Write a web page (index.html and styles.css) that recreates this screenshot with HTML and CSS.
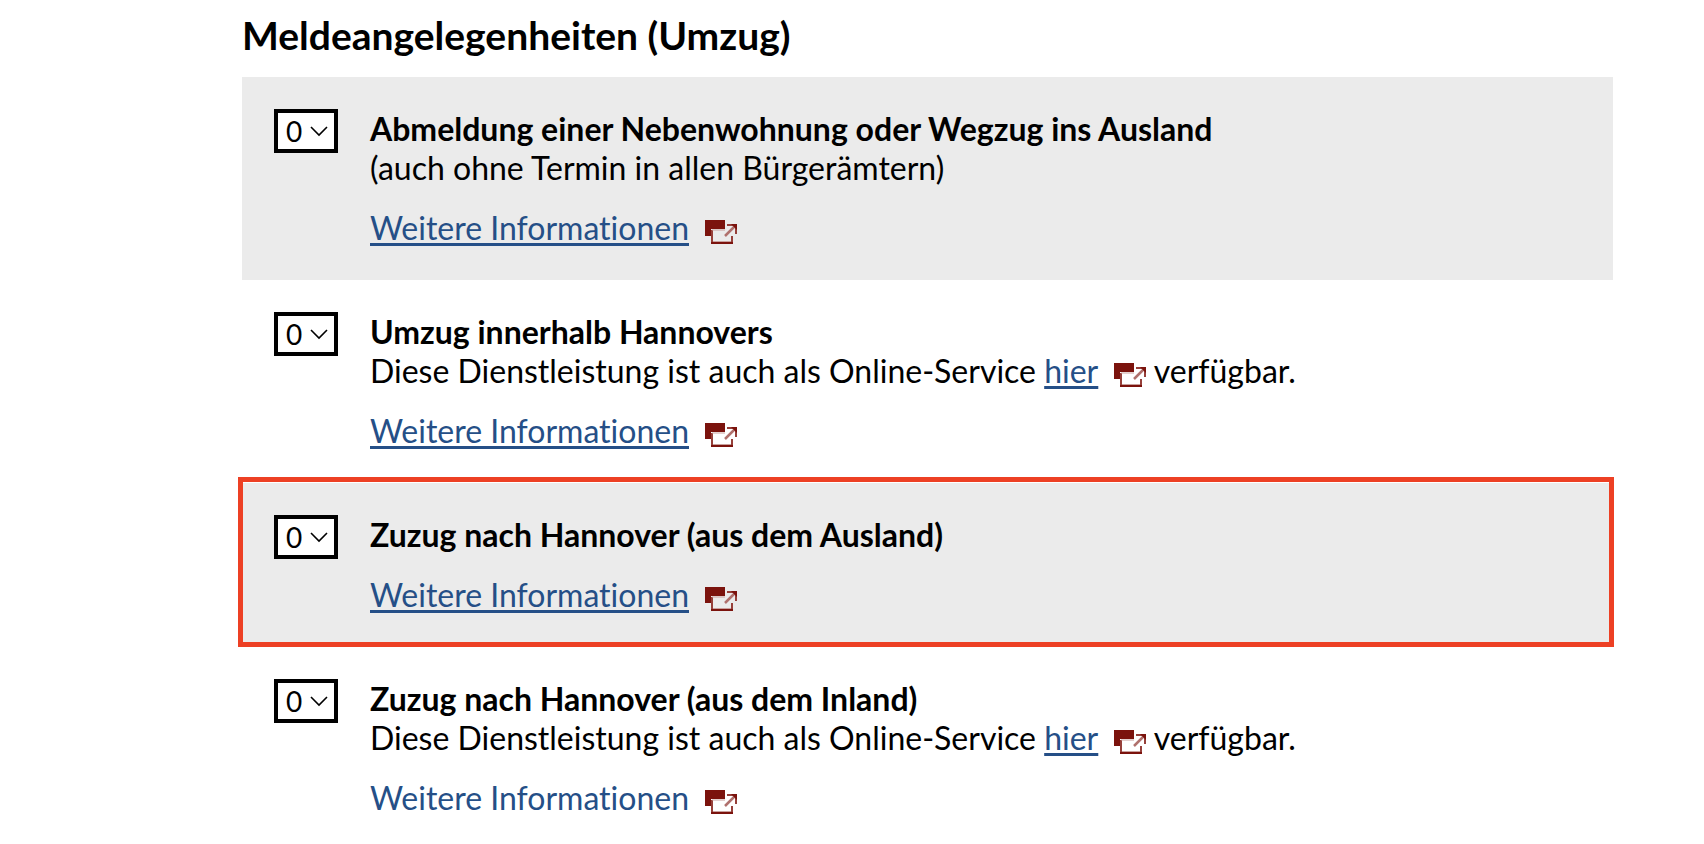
FILE: index.html
```html
<!DOCTYPE html>
<html lang="de">
<head>
    <meta charset="UTF-8">
    <meta name="viewport" content="width=device-width, initial-scale=1.0">
    <title>Meldeangelegenheiten (Umzug)</title>
    <link rel="stylesheet" href="styles.css">
</head>
<body>
    <!-- Symbole -->
    <svg class="symbols" aria-hidden="true">
        <symbol id="extern" viewBox="0 0 32 24">
            <path d="M0 0h20v9H6v7H0z" fill="#7b130d"/>
            <path d="M7 10v13M27 23v-7" fill="none" stroke="#96403a" stroke-width="2"/>
            <path d="M7 10h13" fill="none" stroke="#c9a09d" stroke-width="1"/>
            <path d="M6 23h22" fill="none" stroke="#7b130d" stroke-width="2"/>
            <path d="M8 21.500h18" fill="none" stroke="#c9a09d" stroke-width="1"/>
            <path d="M20 16L30 6" fill="none" stroke="#b0716d" stroke-width="2.500"/>
            <path d="M22 5h9v9" fill="none" stroke="#96403a" stroke-width="2"/>
            <path d="M26 4h6v6z" fill="#7b130d"/>
        </symbol>
        <symbol id="pfeil" viewBox="0 0 18 12">
            <path d="M1 2l8 8 8-8" fill="none" stroke="#000" stroke-width="1.600"/>
        </symbol>
    </svg>

    <main class="services">
        <h2>Meldeangelegenheiten (Umzug)</h2>

        <div class="service grey">
            <div class="amount">
                <select id="service-1" name="service-1">
                    <option>0</option>
                    <option>1</option>
                    <option>2</option>
                </select>
                <svg class="arrow"><use href="#pfeil"/></svg>
            </div>
            <div class="text">
                <label for="service-1">Abmeldung einer Nebenwohnung oder Wegzug ins Ausland</label>
                <p>(auch ohne Termin in allen Bürgerämtern)</p>
                <p class="more"><a href="#info-1">Weitere Informationen</a><svg class="extern"><use href="#extern"/></svg></p>
            </div>
        </div>

        <div class="service">
            <div class="amount">
                <select id="service-2" name="service-2">
                    <option>0</option>
                    <option>1</option>
                    <option>2</option>
                </select>
                <svg class="arrow"><use href="#pfeil"/></svg>
            </div>
            <div class="text">
                <label for="service-2">Umzug innerhalb Hannovers</label>
                <p>Diese Dienstleistung ist auch als Online-Service <a href="#online-2">hier</a><svg class="extern"><use href="#extern"/></svg> verfügbar.</p>
                <p class="more"><a href="#info-2">Weitere Informationen</a><svg class="extern"><use href="#extern"/></svg></p>
            </div>
        </div>

        <div class="service grey marked">
            <div class="amount">
                <select id="service-3" name="service-3">
                    <option>0</option>
                    <option>1</option>
                    <option>2</option>
                </select>
                <svg class="arrow"><use href="#pfeil"/></svg>
            </div>
            <div class="text">
                <label for="service-3">Zuzug nach Hannover (aus dem Ausland)</label>
                <p class="more"><a href="#info-3">Weitere Informationen</a><svg class="extern"><use href="#extern"/></svg></p>
            </div>
        </div>

        <div class="service last">
            <div class="amount">
                <select id="service-4" name="service-4">
                    <option>0</option>
                    <option>1</option>
                    <option>2</option>
                </select>
                <svg class="arrow"><use href="#pfeil"/></svg>
            </div>
            <div class="text">
                <label for="service-4">Zuzug nach Hannover (aus dem Inland)</label>
                <p>Diese Dienstleistung ist auch als Online-Service <a href="#online-4">hier</a><svg class="extern"><use href="#extern"/></svg> verfügbar.</p>
                <p class="more"><a class="plain" href="#info-4">Weitere Informationen</a><svg class="extern"><use href="#extern"/></svg></p>
            </div>
        </div>
    </main>
</body>
</html>
```
FILE: styles.css
```css
body {
    margin: 0;
    background-color: #ffffff;
    color: #000000;
    font-family: Lato, sans-serif;
    font-size: 32px;
    line-height: 39px;
    font-variant-ligatures: none;
}

.symbols {
    display: none;
}

.services {
    padding: 11px 91px 0 242px;
}

.services h2 {
    margin: 0 0 18px;
    font-size: 39px;
    line-height: 48px;
}

.service {
    display: flex;
    align-items: flex-start;
    gap: 32px;
    padding: 32px 32px 33px;
}

.service.grey {
    background-color: #ebebeb;
}

.service.last {
    padding-bottom: 0;
}

/* roter Rahmen liegt über der Zeile */
.service.marked {
    position: relative;
}

.service.marked::after {
    content: "";
    position: absolute;
    inset: -6px -1px 0 -4px;
    border: 5px solid #ed4024;
    pointer-events: none;
}

.amount {
    display: grid;
    flex: none;
    align-items: center;
}

.amount select,
.amount .arrow {
    grid-area: 1 / 1;
}

.amount select {
    appearance: none;
    width: 64px;
    height: 44px;
    margin: 0;
    padding: 0 8px;
    border: 4px solid #000000;
    border-radius: 0;
    background-color: #ffffff;
    color: #000000;
    font-family: inherit;
    font-size: 28px;
}

.amount .arrow {
    justify-self: end;
    width: 18px;
    height: 12px;
    margin-right: 10px;
    pointer-events: none;
}

.text {
    flex: 1;
}

.text label {
    display: block;
    font-weight: bold;
}

.text p {
    margin: 0;
}

.text .more {
    margin-top: 21px;
}

a {
    color: #254f87;
    text-decoration: underline;
    text-decoration-thickness: 3px;
    text-decoration-skip-ink: none;
    text-underline-offset: 3px;
}

a.plain {
    text-decoration: none;
}

.extern {
    width: 32px;
    height: 24px;
    margin-left: 16px;
    vertical-align: -4px;
}
```
